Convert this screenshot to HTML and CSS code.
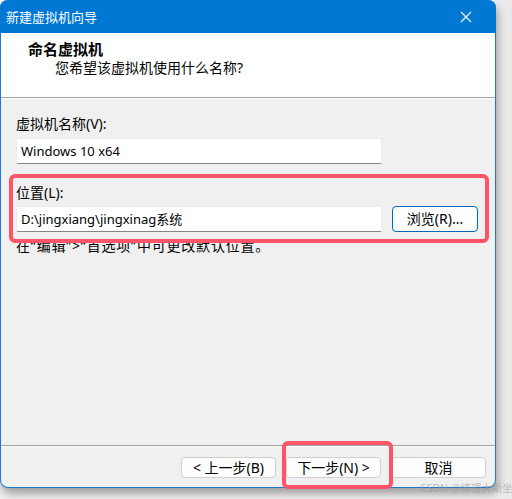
FILE: index.html
```html
<!DOCTYPE html>
<html lang="zh">
<head>
<meta charset="utf-8">
<title>新建虚拟机向导</title>
<link rel="stylesheet" href="styles.css">
</head>
<body>
<div class="window">
  <div class="titlebar">
    <span class="title">新建虚拟机向导</span>
    <svg class="close" width="12" height="12" viewBox="0 0 12 12"><path d="M1 1L11 11M11 1L1 11" stroke="#fff" stroke-width="1.1" fill="none"/></svg>
  </div>
  <div class="header">
    <div class="heading">命名虚拟机</div>
    <div class="subtitle">您希望该虚拟机使用什么名称?</div>
  </div>
  <div class="sep"></div>
  <div class="content">
    <div class="label">虚拟机名称(V):</div>
    <div class="input">Windows 10 x64</div>
    <div class="label label-loc">位置(L):</div>
    <div class="row">
      <div class="input">D:\jingxiang\jingxinag系统</div>
      <div class="browse">浏览(R)...</div>
    </div>
    <div class="hint">在“编辑”&gt;“首选项”中可更改默认位置。</div>
  </div>
  <div class="sep"></div>
  <div class="footer">
    <div class="btn">&lt; 上一步(B)</div>
    <div class="btn">下一步(N) &gt;</div>
    <div class="btn">取消</div>
  </div>
  <div class="mark mark-loc"></div>
  <div class="mark mark-next"></div>
</div>
<div class="watermark">CSDN @修理大斯坐</div>
</body>
</html>
```
FILE: styles.css
```css
html, body {
  margin: 0;
  padding: 0;
}
body {
  width: 512px;
  height: 499px;
  overflow: hidden;
  background: linear-gradient(to right, #f3f3f3 0, #f3f3f3 480px, #e9e9e9 512px);
  font-family: "Noto Sans", "Noto Sans CJK SC", sans-serif;
  color: #000;
  position: relative;
}
.window {
  position: relative;
  width: 494px;
  height: 487px;
  background: #f0f0f0;
  border: 1px solid #1a78d0;
  border-top: none;
  border-radius: 8px;
  display: flex;
  flex-direction: column;
  box-shadow: 2px 6px 10px rgba(0, 0, 0, 0.35);
}
.titlebar {
  height: 33px;
  background: #0078d4;
  border-radius: 8px 8px 0 0;
  margin: 0 -1px;
  display: flex;
  align-items: center;
  justify-content: space-between;
  padding: 0 24px 0 6px;
}
.title {
  color: #fff;
  font-size: 13px;
  line-height: 18px;
}
.close {
  display: block;
}
.header {
  height: 64px;
  background: #fff;
  padding-left: 27px;
  box-sizing: border-box;
  padding-top: 6px;
}
.heading {
  font-weight: bold;
  font-size: 15px;
  line-height: 20px;
}
.subtitle {
  font-size: 14px;
  line-height: 18px;
  padding-left: 27px;
}
.sep {
  height: 1px;
  background: #a0a0a0;
  border-bottom: 1px solid #fff;
}
.content {
  flex: 1;
  padding: 16px 15px 0;
}
.label {
  font-size: 14px;
  line-height: 18px;
  margin-bottom: 5px;
}
.label-loc {
  margin-top: 20px;
  margin-bottom: 4px;
}
.input {
  width: 366px;
  height: 26px;
  box-sizing: border-box;
  background: #fff;
  border: 1px solid #ececec;
  border-bottom: 1px solid #868686;
  border-radius: 2px;
  padding: 0 4px;
  font-size: 13px;
  line-height: 24px;
}
.row {
  display: flex;
  gap: 10px;
}
.browse {
  width: 86px;
  height: 26px;
  box-sizing: border-box;
  border: 1px solid #0067c0;
  border-radius: 4px;
  background: #fdfdfd;
  font-size: 14px;
  line-height: 24px;
  text-align: center;
}
.hint {
  margin-top: 5px;
  font-size: 14px;
  line-height: 18px;
  letter-spacing: 0.8px;
}
.footer {
  height: 40px;
  box-sizing: border-box;
  padding: 10px 9px 0 0;
  display: flex;
  justify-content: flex-end;
  gap: 10px;
}
.btn {
  width: 95px;
  height: 21px;
  box-sizing: border-box;
  background: #fdfdfd;
  border: 1px solid #d0d0d0;
  border-radius: 4px;
  font-size: 14px;
  line-height: 19px;
  text-align: center;
}
.mark {
  position: absolute;
  border: 4px solid #fd5468;
  border-radius: 6px;
  box-sizing: border-box;
}
.mark-loc {
  left: 8px;
  top: 174px;
  width: 480px;
  height: 69px;
}
.mark-next {
  left: 281px;
  top: 441px;
  width: 111px;
  height: 48px;
}
.watermark {
  position: absolute;
  left: 420px;
  top: 481px;
  font-size: 10.5px;
  line-height: 14px;
  color: rgba(150, 150, 150, 0.6);
  white-space: nowrap;
}
```
